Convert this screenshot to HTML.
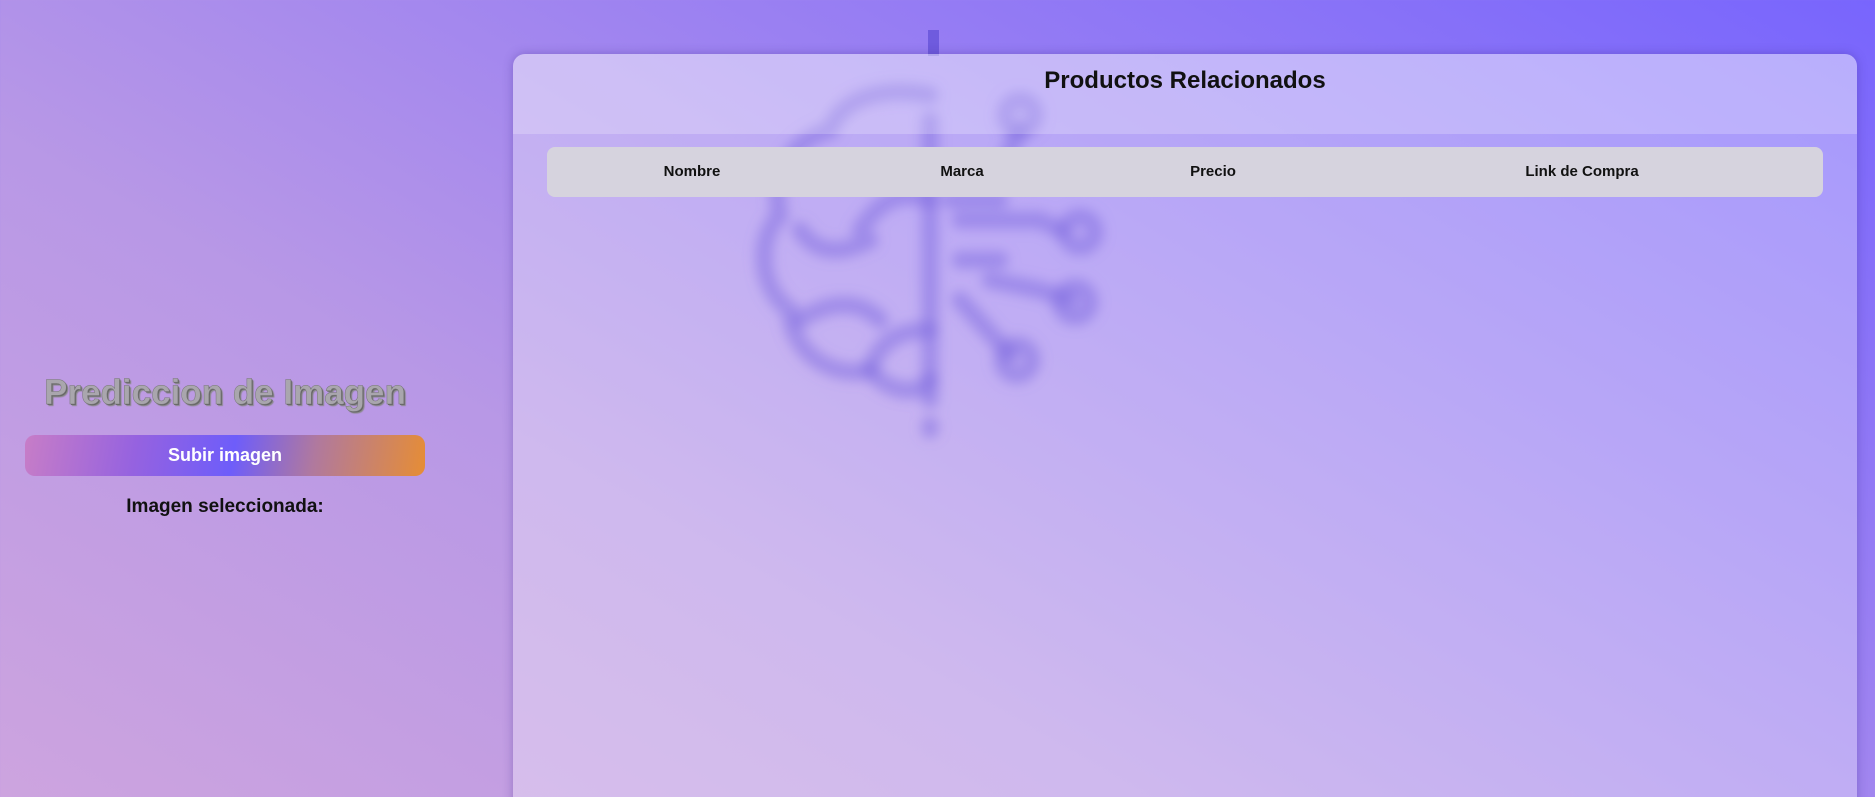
<!DOCTYPE html>
<html><head><meta charset="utf-8"><style>
html,body{margin:0;padding:0;width:1875px;height:797px;overflow:hidden}
body{background:linear-gradient(30deg,#cda4df 0%,#b898e6 35%,#9a80f2 65%,#7865fd 100%);font-family:"Liberation Sans",Arial,sans-serif;position:relative}
.bar{position:absolute;left:928px;top:30px;width:11px;height:26px;background:#6f5bde}
.card{position:absolute;left:513px;top:54px;width:1344px;height:760px;border-radius:12px;background:rgba(255,255,255,0.32);box-shadow:0 0 10px rgba(60,40,140,0.35);overflow:hidden}
.head{position:absolute;left:0;top:0;width:100%;height:80px;background:rgba(255,255,255,0.22)}
.title{position:absolute;left:0;width:100%;top:13px;text-align:center;font-size:24px;font-weight:bold;color:#111}
.brain{position:absolute;left:0;top:0}
.th{position:absolute;left:34px;top:93px;width:1276px;height:50px;background:#d6d3de;border-radius:8px}
.th span{position:absolute;top:16px;font-size:15px;font-weight:bold;color:#111;transform:translateX(-50%)}
h1{position:absolute;left:0;width:450px;top:373px;margin:0;text-align:center;font-size:35px;font-weight:bold;color:#a9a6ad;text-shadow:1px 1px 0 #666,2px 2px 1px #888;-webkit-text-stroke:0.5px #777}
.btn{position:absolute;left:25px;top:435px;width:400px;height:41px;border-radius:10px;background:linear-gradient(100deg,#c77dc7 0%,#9562e0 28%,#6e5dfa 52%,#b0799e 72%,#e68d35 100%);color:#fff;font-weight:bold;font-size:18px;text-align:center;line-height:41px}
.sel{position:absolute;left:0;width:450px;top:496px;text-align:center;font-size:19px;font-weight:bold;color:#111}
</style></head><body>
<div class="bar"></div>
<div class="card">
 <svg class="brain" width="1344" height="760" viewBox="513 54 1344 760">
  <defs><filter id="b"><feGaussianBlur stdDeviation="6"/></filter></defs>
  <g filter="url(#b)" fill="none" stroke="#7d6ae0" stroke-opacity="0.5" stroke-width="17" stroke-linecap="round">
   <path d="M930 95 C880 85 840 100 830 130 C790 140 770 180 780 215 C755 240 760 290 790 310 C790 350 830 380 870 370 C890 395 920 395 930 380"/>
   <path d="M930 200 C900 190 880 200 860 230 M800 230 C820 260 850 250 870 240 M800 320 C830 300 860 300 880 320 M870 370 C880 340 900 330 930 330"/>
   <path d="M930 120 L930 400 M930 425 L930 430"/>
   <path d="M950 200 L1000 200 M960 220 L1040 220 L1060 230 M960 260 L1000 260 M1000 170 L1020 130 M960 300 L1010 355 M990 280 L1040 290 L1070 300"/>
   <circle cx="1020" cy="115" r="15"/><circle cx="1080" cy="232" r="15"/><circle cx="1075" cy="302" r="15"/><circle cx="1017" cy="360" r="15"/>
  </g>
 </svg>
 <div class="head"></div>
 <div class="title">Productos Relacionados</div>
 <div class="th">
  <span style="left:145px">Nombre</span>
  <span style="left:415px">Marca</span>
  <span style="left:666px">Precio</span>
  <span style="left:1035px">Link de Compra</span>
 </div>
</div>
<h1>Prediccion de Imagen</h1>
<div class="btn">Subir imagen</div>
<div class="sel">Imagen seleccionada:</div>
</body></html>
